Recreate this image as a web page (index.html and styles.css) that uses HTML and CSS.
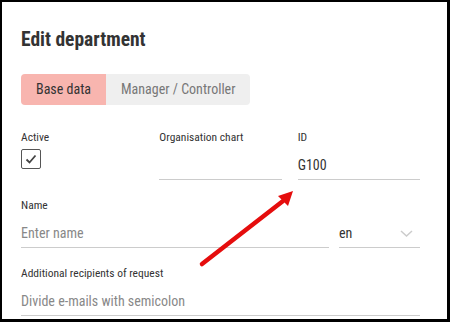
FILE: index.html
```html
<!DOCTYPE html>
<html lang="en">
<head>
  <meta charset="UTF-8">
  <title>Edit department</title>
  <link rel="stylesheet" href="styles.css">
</head>
<body>
  <div class="frame">
    <h1>Edit department</h1>

    <!-- Tabs -->
    <div class="tabs">
      <div class="tab active">Base data</div>
      <div class="tab">Manager / Controller</div>
    </div>

    <!-- Active / Org chart / ID -->
    <div class="row three">
      <div class="field">
        <label>Active</label>
        <div class="checkbox">
          <svg width="14" height="14" viewBox="0 0 14 14">
            <path d="M2.5 7.5 L5.5 10.5 L11.5 3.5" fill="none" stroke="#444" stroke-width="1.8"/>
          </svg>
        </div>
      </div>
      <div class="field">
        <label>Organisation chart</label>
        <div class="input"></div>
      </div>
      <div class="field">
        <label>ID</label>
        <div class="input">G100</div>
      </div>
    </div>

    <!-- Name -->
    <div class="field">
      <label>Name</label>
      <div class="row name">
        <div class="input placeholder">Enter name</div>
        <div class="input select">
          en
          <svg width="13" height="7" viewBox="0 0 13 7">
            <path d="M1 1 L6.5 6 L12 1" fill="none" stroke="#ccc" stroke-width="1.5"/>
          </svg>
        </div>
      </div>
    </div>

    <div class="field">
      <label>Additional recipients of request</label>
      <div class="input placeholder">Divide e-mails with semicolon</div>
    </div>

    <!-- Annotation arrow -->
    <svg class="arrow" width="110" height="90" viewBox="0 0 110 90">
      <line x1="7" y1="81" x2="88" y2="18" stroke="#e50d0d" stroke-width="4.5" stroke-linecap="round"/>
      <polygon points="98,8 83,13 93,23" fill="#e50d0d"/>
    </svg>
  </div>
</body>
</html>
```

FILE: styles.css
```css
body {
  margin: 0;
  font-family: Roboto, "Liberation Sans", sans-serif;
  font-stretch: 87.5%;
  background: #ffffff;
}

.frame {
  position: relative;
  width: 450px;
  height: 322px;
  box-sizing: border-box;
  border-style: solid;
  border-color: #000;
  border-width: 2px 3px 3px 2px;
  padding: 0 27px 0 19px;
  overflow: hidden;
}

h1 {
  margin: 26px 0 0;
  font-size: 19.5px;
  font-weight: 700;
  color: #333;
  line-height: 24px;
}

.tabs {
  display: flex;
  margin-top: 22px;
  width: max-content;
}

.tab {
  padding: 0 15px;
  height: 31px;
  line-height: 31px;
  font-size: 14px;
  color: #777;
  background: #efefef;
}

.tab:first-child {
  border-radius: 4px 0 0 4px;
}

.tab:last-child {
  border-radius: 0 4px 4px 0;
}

.tab.active {
  background: #f8b5af;
  color: #333;
}

.row.three {
  display: grid;
  grid-template-columns: 1fr 1fr 1fr;
  column-gap: 16px;
  margin-top: 25px;
}

.row.name {
  display: grid;
  grid-template-columns: 1fr 81px;
  column-gap: 10px;
}

.field {
  margin-bottom: 18px;
}

label {
  display: block;
  font-size: 11.5px;
  color: #333;
  line-height: 14px;
}

.checkbox {
  width: 18px;
  height: 18px;
  margin-top: 5px;
  border: 1px solid #555;
  border-radius: 2px;
  display: flex;
  align-items: center;
  justify-content: center;
}

.input {
  height: 20px;
  line-height: 20px;
  padding: 11px 0 4px;
  border-bottom: 1px solid #ccc;
  font-size: 14px;
  color: #333;
}

.placeholder {
  color: #888;
}

.select {
  display: flex;
  justify-content: space-between;
  align-items: center;
}

.select svg {
  margin-right: 7px;
}

.arrow {
  position: absolute;
  left: 193px;
  top: 181px;
}
```
